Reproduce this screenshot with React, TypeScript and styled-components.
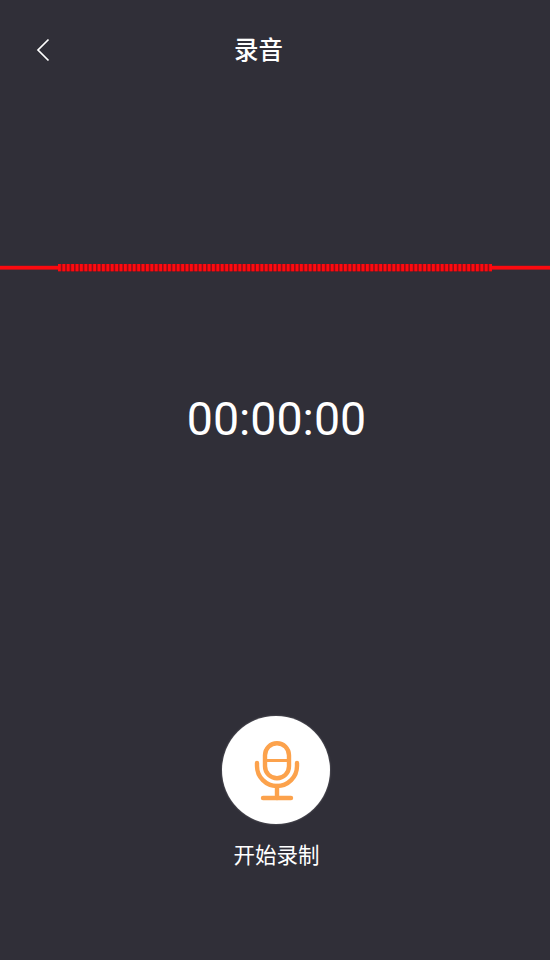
import styled, { createGlobalStyle } from 'styled-components'

const GlobalStyle = createGlobalStyle`
  html, body {
    margin: 0;
    padding: 0;
    background: #302f38;
  }
`

const Page = styled.div`
  width: 550px;
  height: 960px;
  overflow: hidden;
  background: #302f38;
  color: #fff;
  display: flex;
  flex-direction: column;
  font-family: Roboto, "Noto Sans CJK SC", sans-serif;
`

const Header = styled.header`
  height: 102px;
  display: grid;
  grid-template-columns: 100px 1fr 100px;
  align-items: center;
  flex-shrink: 0;
`

const BackButton = styled.button`
  width: 30px;
  height: 30px;
  margin: 0 0 2px 28px;
  padding: 0;
  border: 0;
  background: none;
  display: flex;
  align-items: center;
  justify-content: center;
`

const Title = styled.h1`
  margin: 0 33px 6px 0;
  font-size: 24.5px;
  font-weight: 500;
  text-align: center;
`

const Wave = styled.svg`
  display: block;
  width: 550px;
  height: 16px;
  margin-top: 158px;
  flex-shrink: 0;
`

const Timer = styled.div`
  margin: 113px 0 0 3px;
  height: 60px;
  line-height: 60px;
  font-size: 46.5px;
  text-align: center;
`

const Recorder = styled.div`
  margin-top: 267px;
  display: flex;
  flex-direction: column;
  align-items: center;
`

const RecordButton = styled.button`
  width: 108px;
  height: 108px;
  margin-left: 2px;
  padding: 0;
  border: 0;
  border-radius: 50%;
  background: #fff;
  box-shadow: 0 0 2px rgba(255, 255, 255, 0.35);
  display: flex;
  align-items: center;
  justify-content: center;
`

const MicIcon = styled.svg`
  margin: 2px 0 0 2px;
`

const RecordLabel = styled.span`
  margin-top: 17px;
  margin-left: 3px;
  font-size: 21.5px;
  line-height: 30px;
`

const bars = Array.from({ length: 99 }, (_, i) => 58 + i * 4.4)

const App = () => (
  <Page>
    <GlobalStyle />
    <Header>
      <BackButton aria-label="back">
        <svg width="16" height="26" viewBox="0 0 16 26" fill="none">
          <path d="M13.5 2.5 L3 13 L13.5 23.5" stroke="#fff" strokeWidth="1.7" />
        </svg>
      </BackButton>
      <Title>录音</Title>
    </Header>
    <Wave viewBox="0 0 550 16">
      <rect x="0" y="5.8" width="550" height="3.8" fill="#fb0a0f" />
      <rect x="58" y="4" width="434" height="7.3" fill="#8f0f18" />
      {bars.map((x) => (
        <rect key={x} x={x} y="4" width="2.8" height="7.3" fill="#ff0a0f" />
      ))}
    </Wave>
    <Timer>00:00:00</Timer>
    <Recorder>
      <RecordButton aria-label="start">
        <MicIcon width="46" height="60" viewBox="0 0 46 60" fill="none" stroke="#fca24c" strokeWidth="4.4" strokeLinecap="round">
          <rect x="11" y="2.2" width="24" height="35" rx="12" />
          <path d="M11 19.5 H35" strokeWidth="3.2" />
          <path d="M3 22 V25 A20 20 0 0 0 43 25 V22" />
          <path d="M23 45 V57" />
          <path d="M9 57 H37" />
        </MicIcon>
      </RecordButton>
      <RecordLabel>开始录制</RecordLabel>
    </Recorder>
  </Page>
)

export default App
